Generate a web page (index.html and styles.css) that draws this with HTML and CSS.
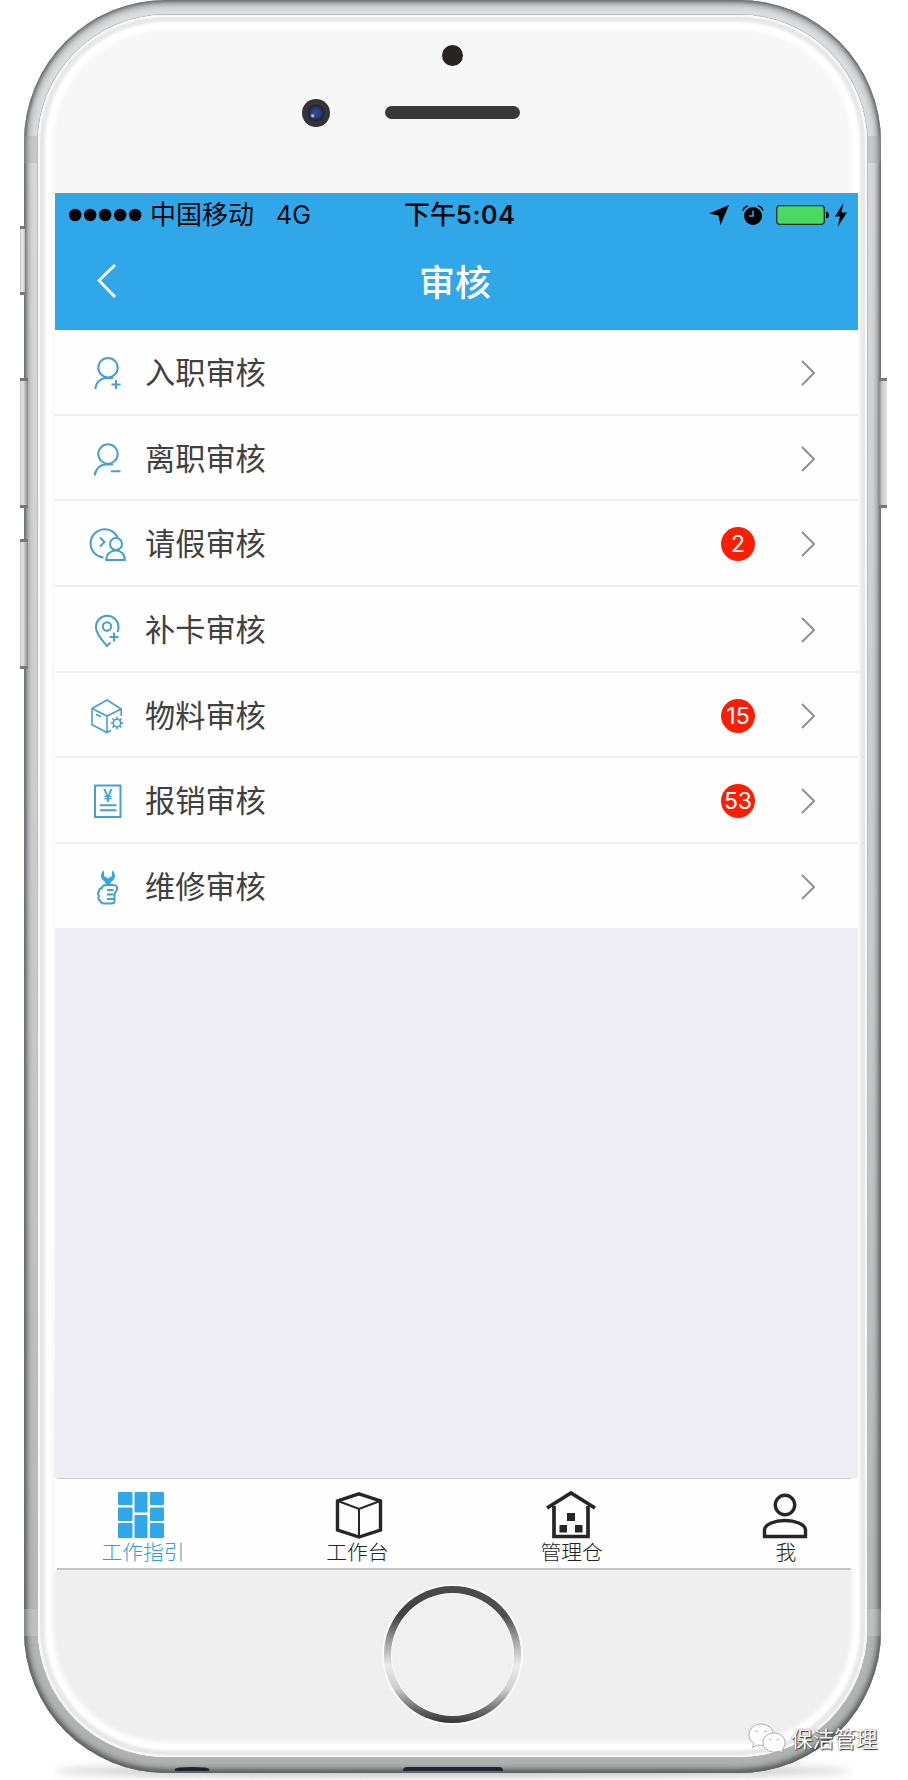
FILE: index.html
```html
<!DOCTYPE html>
<html lang="zh-CN">
<head>
  <meta charset="UTF-8">
  <meta name="viewport" content="width=device-width, initial-scale=1.0">
  <title>审核</title>
  <link rel="stylesheet" href="styles.css">
</head>
<body>
  <div class="phone">
    <span class="side-button mute"></span>
    <span class="side-button volume-up"></span>
    <span class="side-button volume-down"></span>
    <span class="side-button power"></span>
    <span class="antenna top"></span>
    <span class="antenna bottom"></span>
    <span class="port jack"></span>
    <span class="port plug"></span>

    <div class="face">
      <div class="forehead">
        <span class="sensor"></span>
        <div class="speaker-row">
          <span class="camera"></span>
          <span class="speaker"></span>
        </div>
      </div>

      <div class="screen">
        <header class="header">
          <div class="status">
            <div class="status-left">
              <svg class="signal" width="73" height="14" viewBox="0 0 73 14">
                <circle cx="6.2" cy="7" r="6.2"/><circle cx="21.2" cy="7" r="6.2"/><circle cx="36.2" cy="7" r="6.2"/><circle cx="51.2" cy="7" r="6.2"/><circle cx="66.2" cy="7" r="6.2"/>
              </svg>
              <span class="carrier">中国移动</span>
              <span class="network">4G</span>
            </div>
            <div class="time">下午<span>5:04</span></div>
            <div class="status-right">
              <svg class="location" width="20" height="20" viewBox="0 0 20 20"><path d="M20 0 11.5 20 9.5 10.500 0 8.500z"/></svg>
              <svg class="alarm" width="22" height="20" viewBox="0 0 22 20">
                <circle cx="11" cy="11" r="9"/>
                <path d="M1 5.500Q2 2 6 1M21 5.500Q20 2 16 1" fill="none" stroke="#000" stroke-width="1.600"/>
                <path d="M11 5.500V11H7" fill="none" stroke="#2fa7e9" stroke-width="1.600"/>
              </svg>
              <svg class="battery" width="54" height="20" viewBox="0 0 54 20">
                <rect x=".7" y=".7" width="47.600" height="18.600" rx="3" fill="#4bd964" stroke="#0a2e28" stroke-width="1.300"/>
                <path d="M50 6.500q3 .5 3 3.500t-3 3.500z"/>
              </svg>
              <svg class="bolt" width="12" height="24" viewBox="0 0 12 24"><path d="M8.500 0 0 13.500h5L2.500 24 12 9.500H6.500z"/></svg>
            </div>
          </div>
          <div class="navbar">
            <svg class="back" width="20" height="36" viewBox="0 0 20 36"><path d="M18 2 2 17.500 18 34"/></svg>
            <h1>审核</h1>
          </div>
        </header>

        <ul class="list">
          <li class="item">
            <svg class="icon" viewBox="0 0 40 40"><circle cx="20" cy="14.700" r="9.700"/><path d="M7.300 36C8 29 13 25 18 25h7M23.500 31.500h9M28 27v9"/></svg>
            <span class="label">入职审核</span>
            <svg class="arrow" viewBox="0 0 14 26"><path d="M1 1l12 12L1 25"/></svg>
          </li>
          <li class="item">
            <svg class="icon" viewBox="0 0 40 40"><circle cx="20" cy="15" r="9.700"/><path d="M6.600 36.500C7.500 30 12 25.500 18 25.500h7M23 32.300h9.500"/></svg>
            <span class="label">离职审核</span>
            <svg class="arrow" viewBox="0 0 14 26"><path d="M1 1l12 12L1 25"/></svg>
          </li>
          <li class="item">
            <svg class="icon" viewBox="0 0 40 40"><path d="M15.500 33.500A14.200 14.200 0 1 1 29.700 13.500M12 13.500l4.500 4.500-4.500 4.500"/><circle cx="28" cy="20" r="6"/><path d="M18.300 36h18.500c0-6-4-9.500-9-9.500s-9.500 3.500-9.500 9.500z"/></svg>
            <span class="label">请假审核</span>
            <span class="badge">2</span>
            <svg class="arrow" viewBox="0 0 14 26"><path d="M1 1l12 12L1 25"/></svg>
          </li>
          <li class="item">
            <svg class="icon" viewBox="0 0 40 40"><path d="M29.500 22Q30.500 19.500 30.500 17A11.300 11.300 0 0 0 7.900 17C7.900 24 14 30 19 36l3.500-3.500M21.500 27h9M26 22.500v9"/><circle cx="19" cy="16.500" r="4.200"/></svg>
            <span class="label">补卡审核</span>
            <svg class="arrow" viewBox="0 0 14 26"><path d="M1 1l12 12L1 25"/></svg>
          </li>
          <li class="item">
            <svg class="icon thin" viewBox="0 0 40 40"><path d="M33.200 20v-7L19 4 4 12.500v16.300L19 36.500l4-2M4 12.500l15 7.500 14.200-7M19 20v16.500M8 18.500l5 2.300"/><circle cx="29" cy="27" r="3.700"/><path d="M29 23.300v-2.600M29 30.700v2.600M25.300 27h-2.600M32.700 27h2.600M26.400 24.400l-1.900-1.900M31.600 24.400l1.900-1.900M26.400 29.600l-1.900 1.900M31.600 29.600l1.900 1.900"/></svg>
            <span class="label">物料审核</span>
            <span class="badge">15</span>
            <svg class="arrow" viewBox="0 0 14 26"><path d="M1 1l12 12L1 25"/></svg>
          </li>
          <li class="item">
            <svg class="icon" viewBox="0 0 40 40"><rect x="7" y="4.500" width="25.500" height="31.500"/><path d="M12 24.300h16.500M12 29.300h16.500"/><text x="19.800" y="21" text-anchor="middle">¥</text></svg>
            <span class="label">报销审核</span>
            <span class="badge">53</span>
            <svg class="arrow" viewBox="0 0 14 26"><path d="M1 1l12 12L1 25"/></svg>
          </li>
          <li class="item">
            <svg class="icon" viewBox="0 0 40 40"><path class="solid" d="M16 3.500C12 6 12 12 16 14l2.500 3.500h3L24 14c4-2 4-8 0-10.500v5.500l-4 2.500-4-2.500z"/><path d="M14 21c0-2.500 2-3 5-3h6c4 0 5 3 3.500 5.500-1.500 2-2 3-2 5V34c0 1.800-1 2.500-3 2.500h-7c-3 0-4-1-4.500-3-2-1-2-3-1-4.500-1.500-2-1-3.500 0-4.500 0-2 1-3.500 3-3.500zM19 23h6.500M19 27.500h6.500M19 32h6.500"/></svg>
            <span class="label">维修审核</span>
            <svg class="arrow" viewBox="0 0 14 26"><path d="M1 1l12 12L1 25"/></svg>
          </li>
        </ul>

        <nav class="tabs">
          <div class="tab active">
            <svg width="46" height="46" viewBox="0 0 46 46">
              <g fill="#2fa7e9">
                <rect width="14.500" height="13" rx="1"/><rect y="15.500" width="14.500" height="13.500" rx="1"/><rect y="31" width="14.500" height="15" rx="1"/>
                <rect x="16.500" width="13" height="20.500" rx="1"/><rect x="16.500" y="23" width="13" height="23" rx="1"/>
                <rect x="32" width="14" height="13" rx="1"/><rect x="32" y="15.500" width="14" height="13.500" rx="1"/><rect x="32" y="31" width="14" height="15" rx="1"/>
              </g>
            </svg>
            <span>工作指引</span>
          </div>
          <div class="tab box">
            <svg width="48" height="46" viewBox="0 0 48 46">
              <path d="M24 1.800 45.500 9v29L24 45 2.500 38V9z" fill="none" stroke="#262626" stroke-width="3.400"/>
              <path d="M3 9l21 8 21-8M24 17v27" fill="none" stroke="#262626" stroke-width="2"/>
            </svg>
            <span>工作台</span>
          </div>
          <div class="tab house">
            <svg width="50" height="48" viewBox="0 0 50 48">
              <path d="M1 17 25 2l24 15M8 15v30.500h34V15" fill="none" stroke="#262626" stroke-width="3.700"/>
              <path d="M21 22h8v8h-8zM13.500 34h7.500v7.500h-7.500zM29 34h7.500v7.500H29z" fill="#262626"/>
            </svg>
            <span>管理仓</span>
          </div>
          <div class="tab me">
            <svg width="46" height="46" viewBox="0 0 46 46">
              <circle cx="23" cy="13" r="9.700" fill="none" stroke="#262626" stroke-width="3.400"/>
              <path d="M2.500 44.500V38C3 32 13 28.500 23 28.500S43 32 43.500 38v6.500z" fill="none" stroke="#262626" stroke-width="3.400"/>
            </svg>
            <span>我</span>
          </div>
        </nav>
      </div>

      <div class="chin">
        <div class="home"><span></span></div>
      </div>
    </div>
  </div>

  <div class="watermark">
    <svg width="38" height="32" viewBox="0 0 38 32">
      <path d="M13 1C6 1 1 6 1 12c0 4 2 6.500 5 8.500L4.500 24.500l5-2.500c9 2 16-3 16-10C25.500 6 20 1 13 1z"/>
      <path d="M26 10c-6.500 0-11 4-11 9.500S20 29 26 29c2 0 3.500-.3 5-1l4 2-1-3.500c2-1.700 3-4 3-7C37 14 32.500 10 26 10z"/>
      <path d="M7 9q1.500-2 3 0M16 9q1.500-2 3 0M21 17q1.300-2 2.600 0M28.500 17q1.300-2 2.600 0"/>
    </svg>
    <span>保洁管理</span>
  </div>
</body>
</html>
```

FILE: styles.css
```css
* {
  box-sizing: border-box;
}

body {
  margin: 0;
  height: 1780px;
  position: relative;
  overflow: hidden;
  background: #fff;
  font-family: Inter, "Noto Sans CJK SC", sans-serif;
}

/* phone shell */
.phone {
  position: relative;
  width: 857px;
  height: 1773px;
  margin-left: 24px;
  padding: 15px 14px 16px;
  border-radius: 142px;
  background: linear-gradient(#dcdfe1, #d5d7d8 12%, #cbcdce 50%, #b6b8b8 90%, #afb1b1);
  box-shadow: inset 0 0 3px 1px #6c6f72, inset 0 3px 8px rgba(0, 0, 0, 0.25), inset 0 -3px 6px rgba(0, 0, 0, 0.4), inset 0 0 9px 1px rgba(0, 0, 0, 0.4);
}

.phone::after {
  content: "";
  position: absolute;
  z-index: -1;
  left: 30px;
  right: 30px;
  bottom: -3px;
  height: 10px;
  border-radius: 50%;
  background: #bbb;
  filter: blur(4px);
}

.face {
  position: relative;
  height: 100%;
  display: flex;
  flex-direction: column;
  padding: 0 9px 0 17px;
  border-radius: 128px;
  overflow: hidden;
  background: linear-gradient(#f7f7f7 70%, #efeff0 85%);
  box-shadow: 0 0 0 1px #b9bcbe, inset 0 0 0 2px #f8f8f8, inset 0 0 3px 7px #e8e8e8, inset 0 0 5px 15px #fff;
}

.forehead {
  height: 178px;
  padding: 30px 8px 0 0;
  display: flex;
  flex-direction: column;
  align-items: center;
}

.sensor {
  width: 21px;
  height: 21px;
  border-radius: 50%;
  background: #262322;
}

.speaker-row {
  display: flex;
  align-items: center;
  gap: 55px;
  margin-top: 33px;
  padding-right: 83px;
}

.camera {
  width: 28px;
  height: 28px;
  border-radius: 50%;
  background: radial-gradient(circle at 38% 60%, #9dc4ef 0 3%, transparent 10%), radial-gradient(circle, #34498e 0, #2a3878 25%, #202440 38%, #353535 48%);
}

.speaker {
  width: 135px;
  height: 13px;
  margin-bottom: 1px;
  border-radius: 7px;
  background: #383838;
}

.side-button {
  position: absolute;
  width: 5px;
  left: -4px;
  border: solid #777;
  border-width: 3px 0;
  background: linear-gradient(90deg, #bbb, #f3f3f3 40%, #bbb);
}

.mute {
  top: 226px;
  height: 69px;
}

.volume-up,
.volume-down {
  width: 8px;
  height: 130px;
  background: linear-gradient(90deg, #c5c5c5, #e6e6e6 35%, #858585);
}

.volume-up {
  top: 378px;
}

.volume-down {
  top: 539px;
}

.power {
  left: 855px;
  top: 378px;
  height: 130px;
  width: 8px;
  background: linear-gradient(90deg, #858585, #ccc 40%, #e0e0e0);
}

.antenna {
  position: absolute;
  left: 0;
  width: 857px;
  height: 27px;
  background: rgba(160, 160, 160, 0.3);
}

.antenna.top {
  top: 136px;
}

.antenna.bottom {
  top: 1609px;
  background: rgba(225, 225, 225, 0.25);
}

.port {
  position: absolute;
  z-index: 1;
  bottom: 2px;
  height: 4px;
  background: #20242f;
}

.jack {
  left: 151px;
  width: 34px;
  border-radius: 50% 50% 0 0;
}

.plug {
  left: 379px;
  width: 100px;
  border-radius: 5px 5px 0 0;
}

/* screen */
.screen {
  height: 1377px;
  display: flex;
  flex-direction: column;
  background: linear-gradient(#eeedf3 1285px, #fefefe 1285px);
}

.header {
  height: 137px;
  background: #2fa7e9;
}

.status {
  height: 44px;
  padding: 0 11px 0 14px;
  display: grid;
  grid-template-columns: 335px 1fr auto;
  align-items: center;
  color: #05080c;
}

.status-left,
.status-right {
  display: flex;
  align-items: center;
}

.carrier {
  margin-left: 8px;
  font-size: 26px;
  line-height: 44px;
}

.network {
  margin-left: 22px;
  font-size: 25px;
}

.time {
  font-size: 26px;
  font-weight: 500;
  line-height: 44px;
}

.time span {
  font-size: 25px;
  font-weight: 600;
  letter-spacing: 0.7px;
}

.alarm {
  margin: 0 12px 0 13px;
}

.bolt {
  margin-left: 5px;
}

.navbar {
  position: relative;
  height: 93px;
  display: flex;
  align-items: center;
  justify-content: center;
}

.navbar h1 {
  margin: 0 3px 1px 0;
  font-size: 36px;
  font-weight: 500;
  line-height: 50px;
  color: #fff;
}

.back {
  position: absolute;
  left: 42px;
  top: 26px;
  fill: none;
  stroke: #fff;
  stroke-width: 2.8;
}

.list {
  margin: 0;
  padding: 0;
  list-style: none;
  background: #fefefe;
}

.item {
  height: 85.700px;
  display: flex;
  align-items: center;
  padding: 2px 43px 0 33px;
  border-bottom: 2px solid #f0f0f1;
}

.item:last-child {
  border-bottom: 0;
  height: 84px;
}

.icon {
  width: 40px;
  height: 40px;
  fill: none;
  stroke: #459fd3;
  stroke-width: 2;
}

.icon.thin {
  stroke-width: 1.6;
}

.icon .solid {
  fill: #2fa7e9;
  stroke: none;
}

.icon text {
  font-size: 17px;
  font-weight: 500;
  fill: #2fa0dc;
  stroke: none;
}

.label {
  flex: 1;
  margin-left: 17px;
  font-size: 30.200px;
  line-height: 44px;
  color: #404040;
}

.badge {
  width: 34px;
  height: 34px;
  margin-right: 46px;
  border-radius: 50%;
  background: #fb1d04;
  color: #fff;
  font-size: 23px;
  line-height: 34px;
  text-align: center;
}

.arrow {
  width: 14px;
  height: 26px;
  fill: none;
  stroke: #929292;
  stroke-width: 2;
}

.tabs {
  height: 92px;
  margin: auto 7px 0 2px;
  padding: 12px 19px 0 40px;
  display: flex;
  justify-content: space-between;
  background: #fefefe;
  border-top: 1px solid #cfced6;
  border-bottom: 2px solid #c5c5c6;
}

.tab {
  width: 92px;
  display: flex;
  flex-direction: column;
  align-items: center;
  font-size: 20.800px;
  font-weight: 300;
  line-height: 27px;
  color: #222;
}

.tab svg {
  height: 48px;
}

.tab.active {
  color: #2f9fda;
}

.tab.active svg {
  margin-right: 4px;
}

.tab.box svg {
  margin-left: 4px;
}

.tab.house svg,
.tab.me svg {
  margin-right: 2px;
}

/* home button */
.chin {
  flex: 1;
  padding: 16px 8px 0 0;
  display: flex;
  justify-content: center;
  align-items: flex-start;
}

.home {
  width: 137px;
  height: 137px;
  padding: 8px;
  border-radius: 50%;
  background: linear-gradient(100deg, transparent 50%, rgba(255, 255, 255, 0.12)), linear-gradient(#4a4a4c, #414143 22%, #a5a5a6 42%, #e9e9e9 58%, #ccc 75%, #666 90%, #303030);
  box-shadow: 0 0 0 2px #f9f9f9;
}

.home span {
  display: block;
  height: 100%;
  border-radius: 50%;
  background: #f0f0f0;
  box-shadow: 0 0 0 1px #f9f9f9;
}

.watermark {
  position: absolute;
  left: 748px;
  top: 1722px;
  display: flex;
  align-items: center;
  gap: 5px;
  font-size: 21.600px;
  line-height: 34px;
  color: #fff;
  text-shadow: 1px 1px 1px #333, 0 0 1px #555;
}

.watermark svg {
  fill: #fff;
  stroke: #999;
  stroke-width: 0.8;
}
```
